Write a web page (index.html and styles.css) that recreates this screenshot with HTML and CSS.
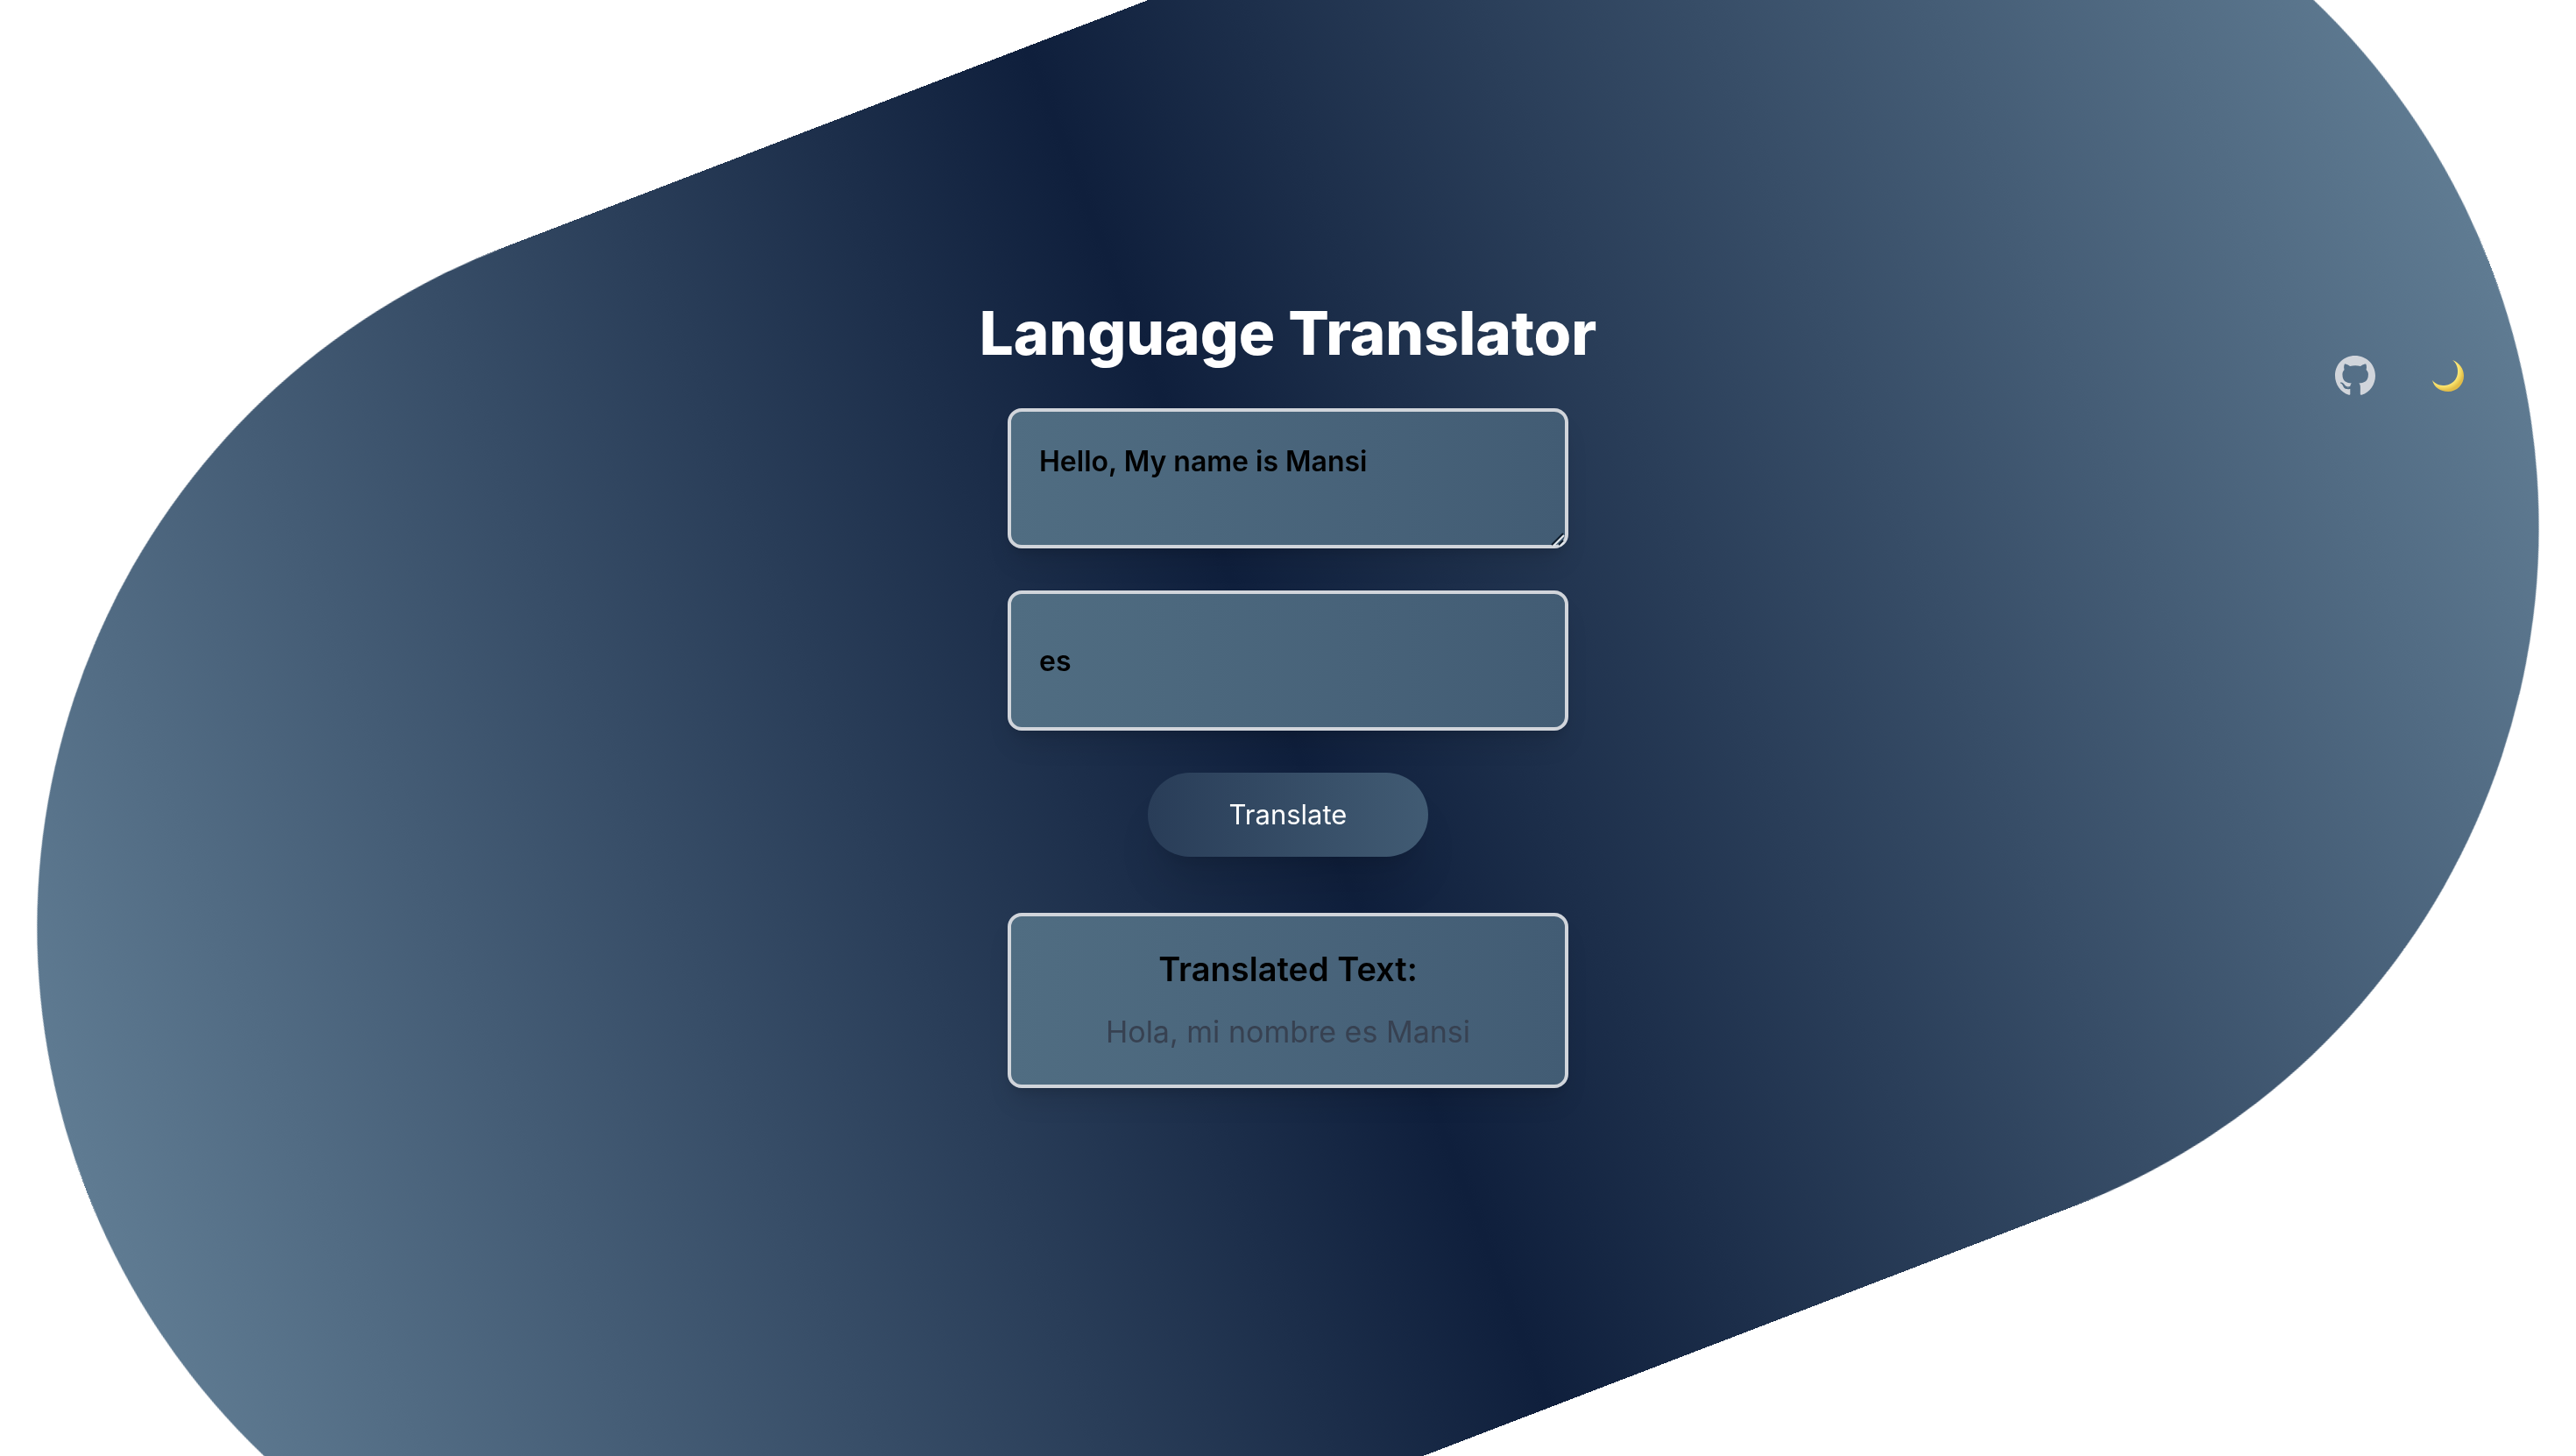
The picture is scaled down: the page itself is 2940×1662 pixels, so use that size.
FILE: index.html
```html
<!DOCTYPE html>
<html lang="en">
<head>
<meta charset="utf-8">
<title>Language Translator</title>
<link rel="stylesheet" href="styles.css">
</head>
<body>
<div class="backdrop"></div>
<div class="page">
  <nav class="toolbar" aria-label="Page links">
    <a class="tool" href="#github" aria-label="GitHub">
      <svg viewBox="0 0 496 512" width="46" height="48" fill="currentColor" aria-hidden="true"><path d="M165.900 397.400c0 2-2.300 3.600-5.200 3.600-3.300.3-5.600-1.300-5.600-3.600 0-2 2.300-3.600 5.200-3.600 3-.3 5.600 1.300 5.600 3.600zM244.800 8C106.100 8 0 113.300 0 252c0 110.900 69.800 205.800 169.500 239.200 12.800 2.300 17.300-5.600 17.300-12.100 0-6.200-.3-40.400-.3-61.400 0 0-70 15-84.700-29.800 0 0-11.400-29.100-27.800-36.600 0 0-22.900-15.700 1.600-15.400 0 0 24.900 2 38.600 25.800 21.900 38.600 58.600 27.500 72.900 20.900 2.300-16 8.800-27.100 16-33.700-55.900-6.200-112.300-14.300-112.300-110.500 0-27.500 7.600-41.300 23.600-58.900-2.600-6.500-11.100-33.300 2.600-67.900 20.900-6.500 69 27 69 27 20-5.600 41.500-8.500 62.800-8.500s42.800 2.900 62.800 8.500c0 0 48.100-33.600 69-27 13.700 34.700 5.200 61.400 2.600 67.900 16 17.700 25.800 31.500 25.800 58.900 0 96.500-58.900 104.200-114.800 110.500 9.200 7.900 17 22.900 17 46.400 0 33.700-.3 75.400-.3 83.600 0 6.500 4.600 14.400 17.300 12.100C428.200 457.800 496 362.900 496 252 496 113.300 383.500 8 244.800 8z"/></svg>
    </a>
    <button class="tool" type="button" aria-label="Dark mode">
      <svg viewBox="0 0 36 36" width="36" height="36" aria-hidden="true">
        <defs><radialGradient id="moon" gradientUnits="userSpaceOnUse" cx="13" cy="12" r="23"><stop offset="0.55" stop-color="#d9b13c"/><stop offset="0.72" stop-color="#ffe978"/><stop offset="0.85" stop-color="#f3d860"/><stop offset="1" stop-color="#e2bd48"/></radialGradient></defs>
        <path fill="url(#moon)" d="M23 0C31 3 36 10 36 18C36 28 28 36 18 36C9 36 2 31 0 23C4 28 9 29 14 29C23 28 29 22 29 13C29 8 27 3 23 0Z"/>
      </svg>
    </button>
  </nav>
  <main class="translator">
    <h1 class="title">Language Translator</h1>
    <form class="form">
      <div class="source">
        <textarea class="field field-source" aria-label="Text to translate">Hello, My name is Mansi</textarea>
        <svg class="grip" viewBox="0 0 16 16" width="16" height="16" fill="none" stroke-width="2" aria-hidden="true">
          <path stroke="#0f1c2b" d="M1 14L14 1M9 14L14 9"/>
          <path stroke="#e2e6ea" d="M3 15L15 3M11 15L15 11"/>
        </svg>
      </div>
      <input class="field" type="text" value="es" aria-label="Target language">
      <button class="submit" type="button">Translate</button>
    </form>
    <section class="result">
      <h2 class="result-title">Translated Text:</h2>
      <p class="result-text">Hola, mi nombre es Mansi</p>
    </section>
  </main>
</div>
</body>
</html>
```

FILE: styles.css
```css
* {
  box-sizing: border-box;
}

body {
  margin: 0;
  min-height: 100vh;
  overflow: hidden;
  background: #fff;
  font-family: Inter, "Liberation Sans", sans-serif;
  color: #000;
}

/* Rotated pill behind the page */
.backdrop {
  position: fixed;
  inset: -2px 0 0;
  border-radius: 9999px;
  background: linear-gradient(to right, #5f7b92, #0f1f3c, #5f7b92);
  transform: rotate(-21deg);
}

.page {
  position: relative;
  display: grid;
  grid-template-columns: 1fr auto 1fr;
  align-items: start;
  min-height: 100vh;
  padding-top: 334px;
}

.toolbar {
  grid-column: 3;
  grid-row: 1;
  display: flex;
  justify-content: flex-end;
  align-items: center;
  gap: 65px;
  padding: 71px 128px 0 0;
}

.tool {
  display: flex;
  padding: 0;
  border: 0;
  background: none;
  color: #d1d5db;
}

.translator {
  grid-column: 2;
  grid-row: 1;
  display: flex;
  flex-direction: column;
  align-items: center;
}

.title {
  margin: 0 0 40px;
  font-size: 69px;
  line-height: 92px;
  font-weight: 800;
  color: #fff;
}

.form {
  display: flex;
  flex-direction: column;
  align-items: center;
  gap: 48px;
  margin-bottom: 64px;
}

.source {
  position: relative;
}

.field,
.result {
  display: block;
  width: 640px;
  border: 4px solid #d1d5db;
  border-radius: 16px;
  background: linear-gradient(to right, #506d82, #425c74);
  box-shadow: 0 20px 30px -6px rgba(0, 0, 0, 0.1), 0 8px 12px -4px rgba(0, 0, 0, 0.1);
}

.field {
  height: 160px;
  padding: 32px;
  font-family: inherit;
  font-size: 32px;
  line-height: 50px;
  font-weight: 600;
  color: #000;
}

.field-source {
  resize: none;
}

/* Resize grip over the text area's corner */
.grip {
  position: absolute;
  right: 4px;
  bottom: 2px;
  pointer-events: none;
}

.submit {
  width: 320px;
  height: 96px;
  border: 0;
  border-radius: 48px;
  background: linear-gradient(to right, #293d58, #415b73);
  box-shadow: 0 40px 50px -10px rgba(0, 0, 0, 0.1), 0 16px 20px -12px rgba(0, 0, 0, 0.1);
  font-family: inherit;
  font-size: 31px;
  line-height: 48px;
  color: #fff;
}

.result {
  height: 200px;
  padding: 32px;
  text-align: center;
}

.result-title {
  margin: 0 0 16px;
  font-size: 38px;
  line-height: 56px;
  font-weight: 600;
}

.result-text {
  margin: 0;
  font-size: 34px;
  line-height: 56px;
  color: #374151;
}
```
